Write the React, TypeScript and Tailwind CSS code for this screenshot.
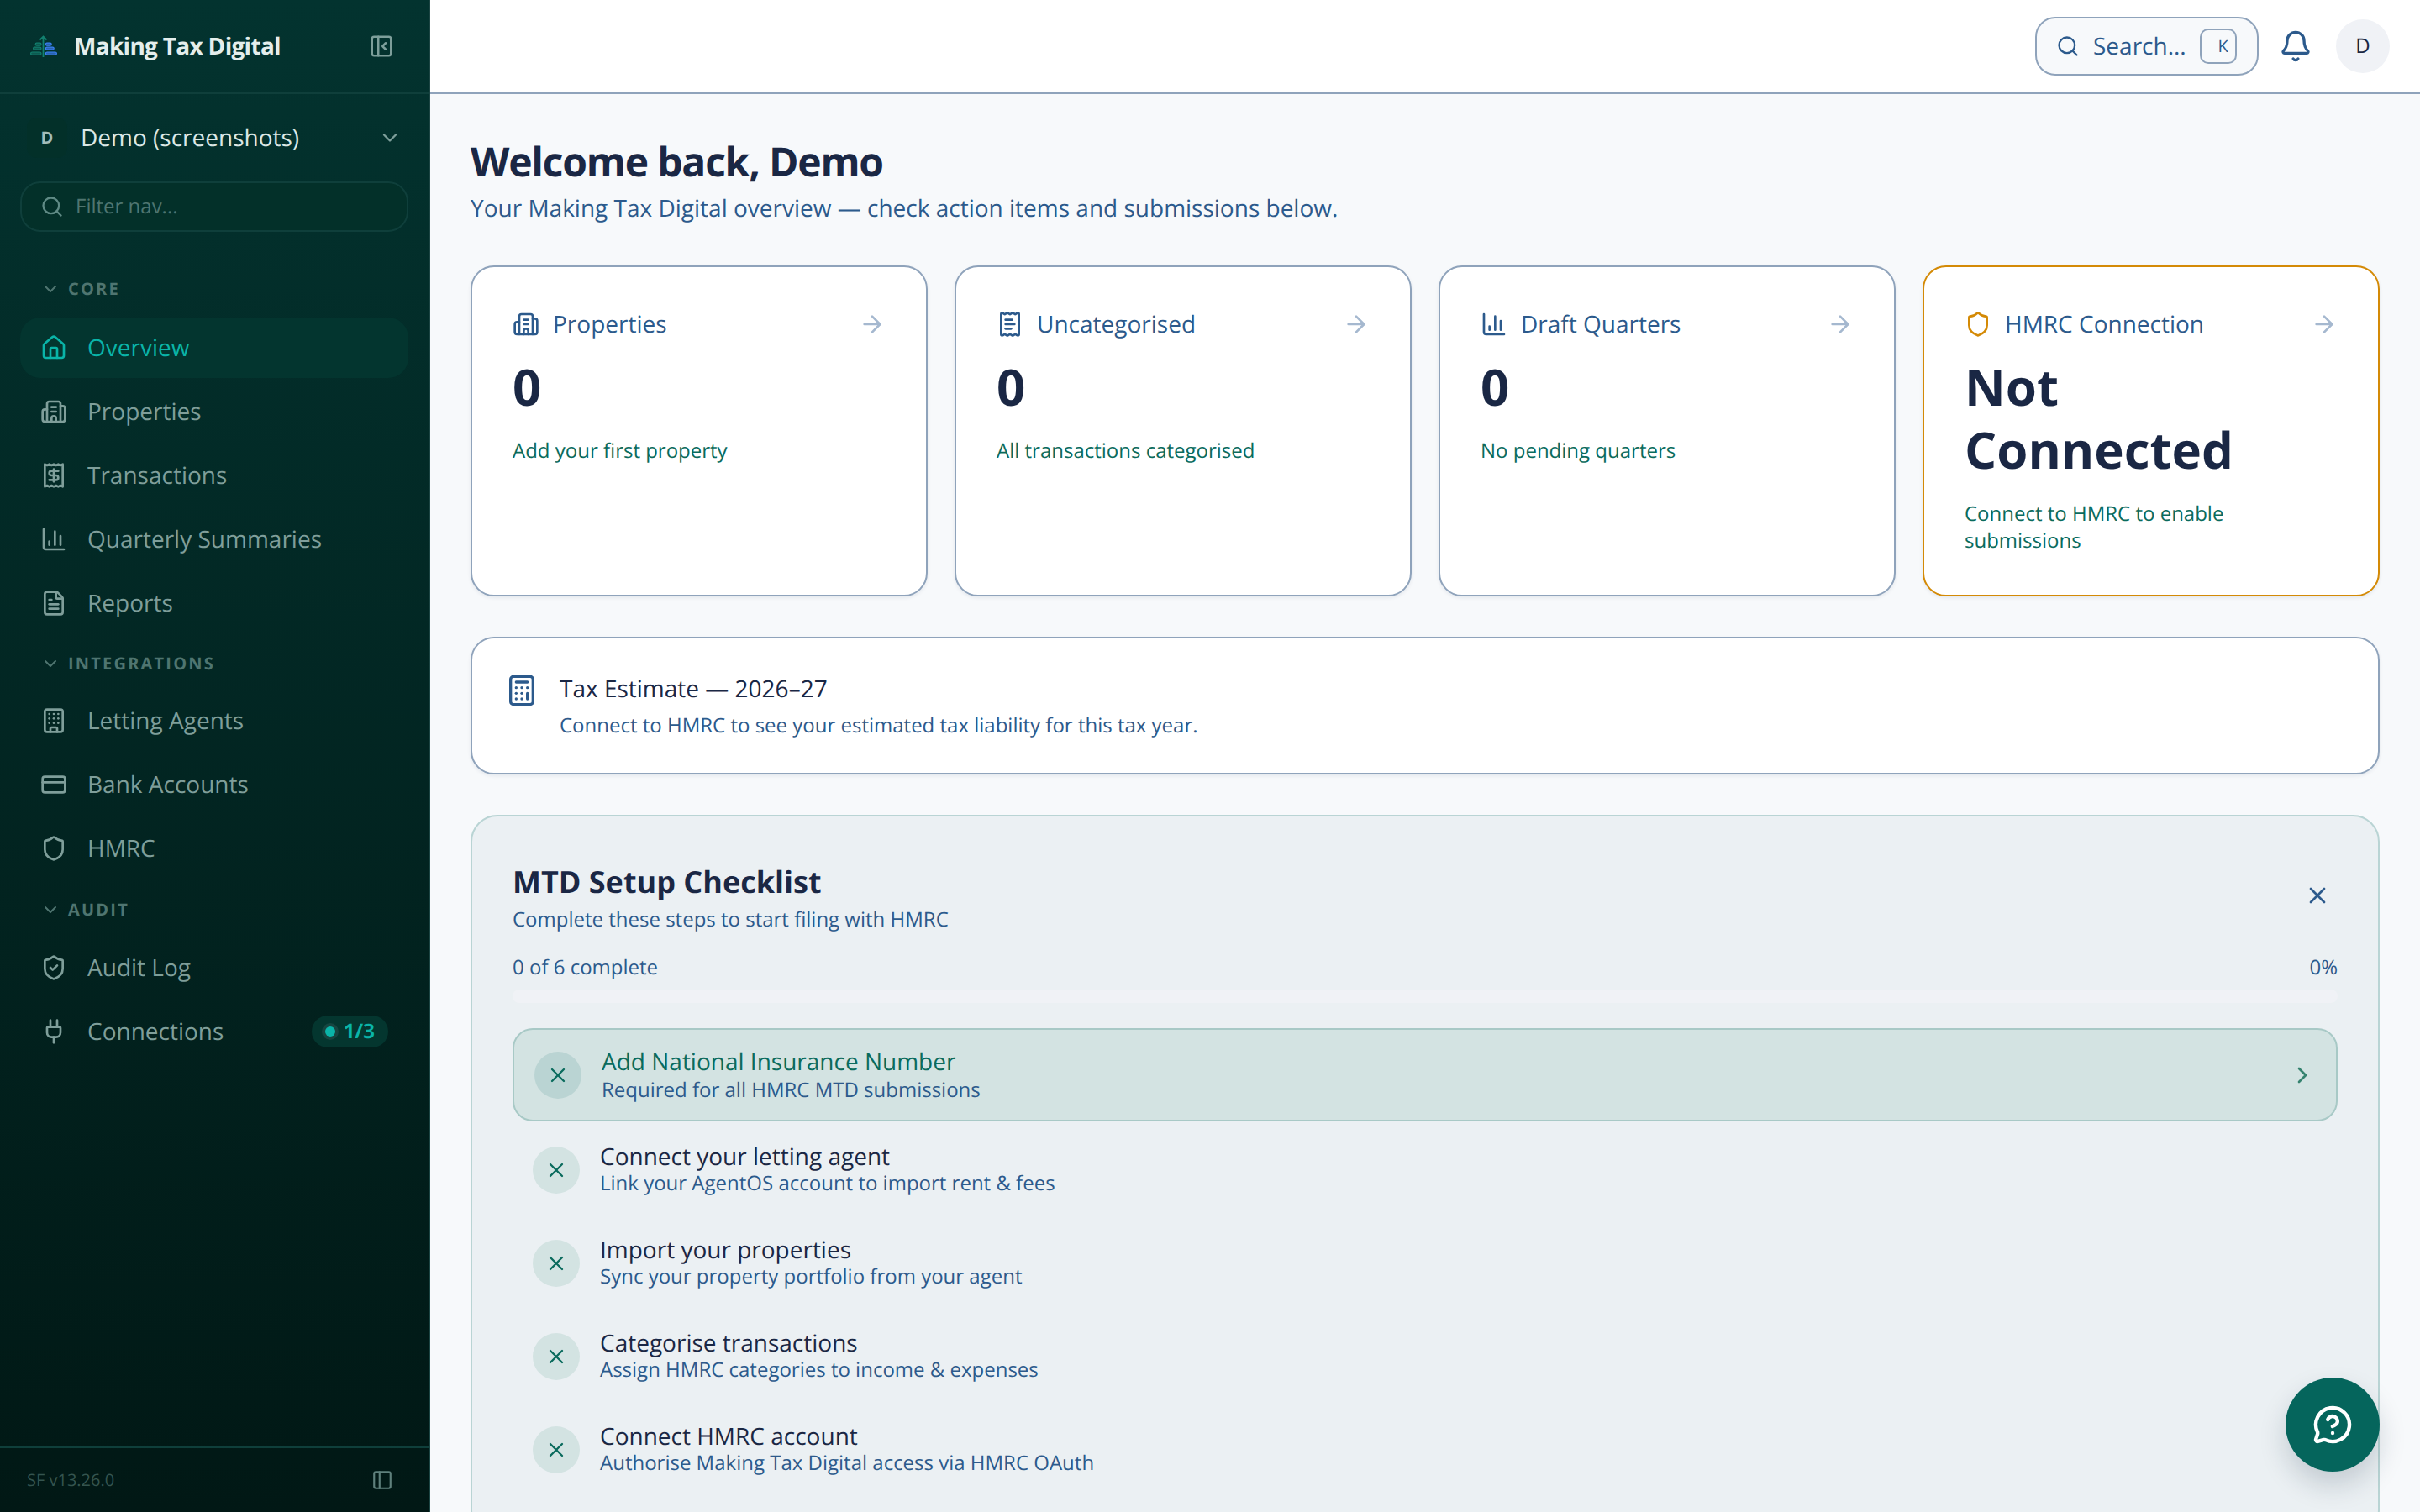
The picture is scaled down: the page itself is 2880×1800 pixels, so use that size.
import {
  ArrowRight,
  Bell,
  Building,
  Building2,
  Calculator,
  ChartColumn,
  ChevronDown,
  ChevronRight,
  CreditCard,
  FileText,
  House,
  MessageCircleQuestion,
  PanelLeft,
  PanelLeftClose,
  Plug,
  Receipt,
  ReceiptText,
  Search,
  Shield,
  ShieldCheck,
  X,
} from "lucide-react";
import type { LucideIcon } from "lucide-react";

interface NavItem {
  label: string;
  icon: LucideIcon;
  active?: boolean;
  badge?: string;
}

const coreItems: NavItem[] = [
  { label: "Overview", icon: House, active: true },
  { label: "Properties", icon: Building2 },
  { label: "Transactions", icon: Receipt },
  { label: "Quarterly Summaries", icon: ChartColumn },
  { label: "Reports", icon: FileText },
];

const integrationItems: NavItem[] = [
  { label: "Letting Agents", icon: Building },
  { label: "Bank Accounts", icon: CreditCard },
  { label: "HMRC", icon: Shield },
];

const auditItems: NavItem[] = [
  { label: "Audit Log", icon: ShieldCheck },
  { label: "Connections", icon: Plug, badge: "1/3" },
];

const stats = [
  { title: "Properties", icon: Building2, value: "0", note: "Add your first property" },
  { title: "Uncategorised", icon: ReceiptText, value: "0", note: "All transactions categorised" },
  { title: "Draft Quarters", icon: ChartColumn, value: "0", note: "No pending quarters" },
];

const steps = [
  { title: "Connect your letting agent", note: "Link your AgentOS account to import rent & fees" },
  { title: "Import your properties", note: "Sync your property portfolio from your agent" },
  { title: "Categorise transactions", note: "Assign HMRC categories to income & expenses" },
  { title: "Connect HMRC account", note: "Authorise Making Tax Digital access via HMRC OAuth" },
];

function Logo() {
  return (
    <svg width="32" height="26" viewBox="0 0 32 26" fill="none" className="shrink-0">
      <path d="M15.5 26V1.5M11.5 5.5l4-4 4 4" stroke="#12806f" strokeWidth="1.8" />
      <g stroke="#12806f" strokeWidth="1.2" fill="#0d5a50">
        <rect x="6.2" y="9.2" width="6.8" height="3" rx="1.5" />
        <rect x="3.6" y="14.2" width="9.4" height="3" rx="1.5" />
        <rect x="0.6" y="20" width="12.4" height="3.4" rx="1.7" />
      </g>
      <g stroke="#3b82f6" strokeWidth="1.2" fill="#2a63b0">
        <rect x="18.4" y="9.2" width="6.8" height="3" rx="1.5" />
        <rect x="18.4" y="14.2" width="9.8" height="3" rx="1.5" />
        <rect x="18.4" y="20" width="13" height="3.4" rx="1.7" />
      </g>
    </svg>
  );
}

function SectionLabel({ label, spacing }: { label: string; spacing: string }) {
  return (
    <div className={`flex items-center gap-[9px] pl-[24px] text-[#4f7570] ${spacing}`}>
      <ChevronDown size={24} strokeWidth={2} />
      <span className="text-[20px] font-bold tracking-[0.11em]">{label}</span>
    </div>
  );
}

function NavRow({ item }: { item: NavItem }) {
  const Icon = item.icon;
  return (
    <div
      className={`flex h-[72px] items-center gap-[24px] rounded-[24px] pr-[24px] pl-[24px] ${
        item.active ? "bg-[#03352f] text-[#0ab4a8]" : "text-[#7f9e9a]"
      }`}
    >
      <Icon size={32} strokeWidth={2} className="shrink-0" />
      <span className="text-[28px] leading-none">{item.label}</span>
      {item.badge && (
        <span className="ml-auto flex h-[38px] items-center gap-[10px] rounded-full bg-[#04362f] pr-[16px] pl-[16px] text-[24px] font-bold text-[#0ab4a8]">
          <span className="h-[12px] w-[12px] rounded-full bg-[#0ab4a8] shadow-[0_0_0_4px_#164540]" />
          {item.badge}
        </span>
      )}
    </div>
  );
}

function Sidebar() {
  return (
    <aside className="flex h-full w-[512px] shrink-0 flex-col border-r-2 border-[#1b4442] bg-linear-to-b/srgb from-[#03332f] to-[#011815]">
      <div className="flex h-[112px] shrink-0 items-center justify-between border-b-2 border-[#0f3f3b] pr-[41px] pl-[36px]">
        <div className="flex items-center gap-[20px]">
          <Logo />
          <span className="text-[28px] font-bold tracking-[-0.025em] text-[#e4eeec]">Making Tax Digital</span>
        </div>
        <PanelLeftClose size={30} className="text-[#7d9e9a]" />
      </div>

      <div className="mt-[28px] flex items-center pr-[32px] pl-[32px]">
        <span className="flex h-[48px] w-[48px] shrink-0 items-center justify-center rounded-[12px] bg-[#033029] text-[20px] font-bold text-[#a3bcb8]">
          D
        </span>
        <span className="ml-[16px] text-[28px] text-[#dce8e6]">Demo (screenshots)</span>
        <ChevronDown size={28} className="ml-auto text-[#7d9e9a]" />
      </div>

      <div className="mx-[24px] mt-[28px] flex h-[60px] items-center gap-[14px] rounded-[24px] border-2 border-[#0f3f3b] bg-[#033029] pl-[22px]">
        <Search size={28} className="text-[#5f8a85]" />
        <span className="text-[24px] text-[#4f7570]">Filter nav...</span>
      </div>

      <nav className="mt-[38px] flex flex-col gap-[4px] px-[24px]">
        <SectionLabel label="CORE" spacing="h-[60px] pb-[1px]" />
        {coreItems.map((item) => (
          <NavRow key={item.label} item={item} />
        ))}
        <SectionLabel label="INTEGRATIONS" spacing="h-[60px] pt-[4px]" />
        {integrationItems.map((item) => (
          <NavRow key={item.label} item={item} />
        ))}
        <SectionLabel label="AUDIT" spacing="h-[62px] pt-[4px]" />
        {auditItems.map((item) => (
          <NavRow key={item.label} item={item} />
        ))}
      </nav>

      <div className="mt-auto flex h-[78px] shrink-0 items-center justify-between border-t-2 border-[#0f3f3b] pr-[42px] pl-[32px]">
        <span className="text-[20px] text-[#34544f]">SF v13.26.0</span>
        <PanelLeft size={26} className="text-[#5f807c]" />
      </div>
    </aside>
  );
}

function TopBar() {
  return (
    <header className="flex h-[112px] shrink-0 items-center justify-end border-b-2 border-[#8fa3bb] bg-white pr-[36px]">
      <div className="flex h-[70px] w-[266px] items-center rounded-[24px] border-2 border-[#8fa3bb] bg-[#f7f9fb] pl-[23px]">
        <Search size={28} className="text-[#2c5a8c]" />
        <span className="ml-[16px] text-[28px] text-[#2c5a8c]">Search...</span>
        <span className="ml-[16px] flex h-[42px] w-[44px] items-center justify-end rounded-[10px] border-2 border-[#8fa3bb] pr-[8px] text-[20px] text-[#2c5a8c]">
          K
        </span>
      </div>
      <Bell size={40} className="ml-[24px] text-[#2c5a8c]" />
      <span className="ml-[28px] flex h-[64px] w-[64px] items-center justify-center rounded-full bg-[#f0f2f6] text-[24px] text-[#1a2744]">
        D
      </span>
    </header>
  );
}

function StatCard({
  title,
  icon: Icon,
  note,
  children,
  warn,
}: {
  title: string;
  icon: LucideIcon;
  note: string;
  children: string;
  warn?: boolean;
}) {
  return (
    <div
      className={`rounded-[28px] border-2 bg-white p-[48px] shadow-[0_2px_4px_rgba(15,40,80,0.08)] ${
        warn ? "border-[#d48a06]" : "border-[#8fa3bb]"
      }`}
    >
      <div className="flex h-[40px] items-center">
        <Icon size={32} className={warn ? "text-[#d48a06]" : "text-[#2c5a8c]"} />
        <span className="ml-[16px] text-[28px] text-[#2c5a8c]">{title}</span>
        <ArrowRight size={32} className="ml-auto text-[#a5b8cf]" />
      </div>
      <div className="mt-[17px] text-[60px] leading-[75px] font-bold text-[#1a2744]">{children}</div>
      <p className="mt-[23px] text-[24px] leading-[32px] text-[#0a6b5d]">{note}</p>
    </div>
  );
}

function StepCircle({ active }: { active?: boolean }) {
  return (
    <span
      className={`flex h-[56px] w-[56px] shrink-0 items-center justify-center rounded-full text-[#0a6b5d] ${
        active ? "bg-[#bad4d3]" : "bg-[#d3e3e2]"
      }`}
    >
      <X size={28} />
    </span>
  );
}

function Checklist() {
  return (
    <section className="mt-[48px] rounded-[32px] border-2 border-[#b9d4d4] bg-[#ebf0f3] px-[48px] pt-[51px] pb-[48px]">
      <div className="flex items-center justify-between">
        <div>
          <h2 className="text-[36px] leading-[54px] font-bold text-[#1a2744]">MTD Setup Checklist</h2>
          <p className="text-[24px] leading-[36px] text-[#2c5a8c]">Complete these steps to start filing with HMRC</p>
        </div>
        <X size={32} className="mr-[8px] mb-[4px] text-[#2c5a8c]" />
      </div>
      <div className="mt-[21px] flex justify-between text-[24px] leading-[36px] text-[#2c5a8c]">
        <span>0 of 6 complete</span>
        <span>0%</span>
      </div>
      <div className="mt-[8px] h-[16px] rounded-full bg-[#f0f2f6]" />

      <div className="mt-[30px] flex flex-col gap-[4px]">
        <div className="flex h-[111px] items-center rounded-[24px] border-2 border-[#a8c9c6] bg-[#d3e3e2] pr-[24px] pl-[24px]">
          <StepCircle active />
          <div className="ml-[24px]">
            <div className="text-[28px] leading-[36px] text-[#0a6b5d]">Add National Insurance Number</div>
            <div className="text-[24px] leading-[32px] text-[#2c5a8c]">Required for all HMRC MTD submissions</div>
          </div>
          <ChevronRight size={32} className="ml-auto text-[#35836f]" />
        </div>
        {steps.map((step) => (
          <div key={step.title} className="flex h-[107px] items-center pl-[24px]">
            <StepCircle />
            <div className="ml-[24px]">
              <div className="text-[28px] leading-[32px] text-[#1a2744]">{step.title}</div>
              <div className="mt-[1px] text-[24px] leading-[30px] text-[#2c5a8c]">{step.note}</div>
            </div>
          </div>
        ))}
      </div>
    </section>
  );
}

export default function App() {
  return (
    <div className="flex h-screen overflow-hidden bg-[#f7f9fb] font-['Open_Sans',sans-serif] [text-rendering:geometricPrecision]">
      <Sidebar />
      <div className="flex min-w-0 flex-1 flex-col">
        <TopBar />
        <main className="flex-1 overflow-hidden px-[48px] pt-[48px]">
          <h1 className="text-[48px] leading-[66px] font-bold tracking-[-0.025em] text-[#1a2744]">Welcome back, Demo</h1>
          <p className="mt-[2px] text-[28px] leading-[40px] text-[#2c5a8c]">
            Your Making Tax Digital overview — check action items and submissions below.
          </p>

          <div className="mt-[48px] grid grid-cols-4 gap-[32px]">
            {stats.map((stat) => (
              <StatCard key={stat.title} title={stat.title} icon={stat.icon} note={stat.note}>
                {stat.value}
              </StatCard>
            ))}
            <StatCard title="HMRC Connection" icon={Shield} note="Connect to HMRC to enable submissions" warn>
              Not Connected
            </StatCard>
          </div>

          <div className="mt-[48px] flex h-[164px] items-start rounded-[28px] border-2 border-[#8fa3bb] bg-white pt-[40px] pl-[39px] shadow-[0_2px_4px_rgba(15,40,80,0.08)]">
            <Calculator size={40} className="mt-[2px] text-[#2c5a8c]" />
            <div className="ml-[25px]">
              <div className="text-[28px] leading-[40px] text-[#1a2744]">Tax Estimate — 2026–27</div>
              <div className="mt-[6px] text-[24px] leading-[36px] text-[#2c5a8c]">
                Connect to HMRC to see your estimated tax liability for this tax year.
              </div>
            </div>
          </div>

          <Checklist />
        </main>
      </div>
      <button className="fixed right-[48px] bottom-[48px] flex h-[112px] w-[112px] items-center justify-center rounded-full bg-[#05655c] text-white shadow-[0_16px_32px_rgba(15,40,60,0.18)]">
        <MessageCircleQuestion size={48} strokeWidth={2.2} />
      </button>
    </div>
  );
}
